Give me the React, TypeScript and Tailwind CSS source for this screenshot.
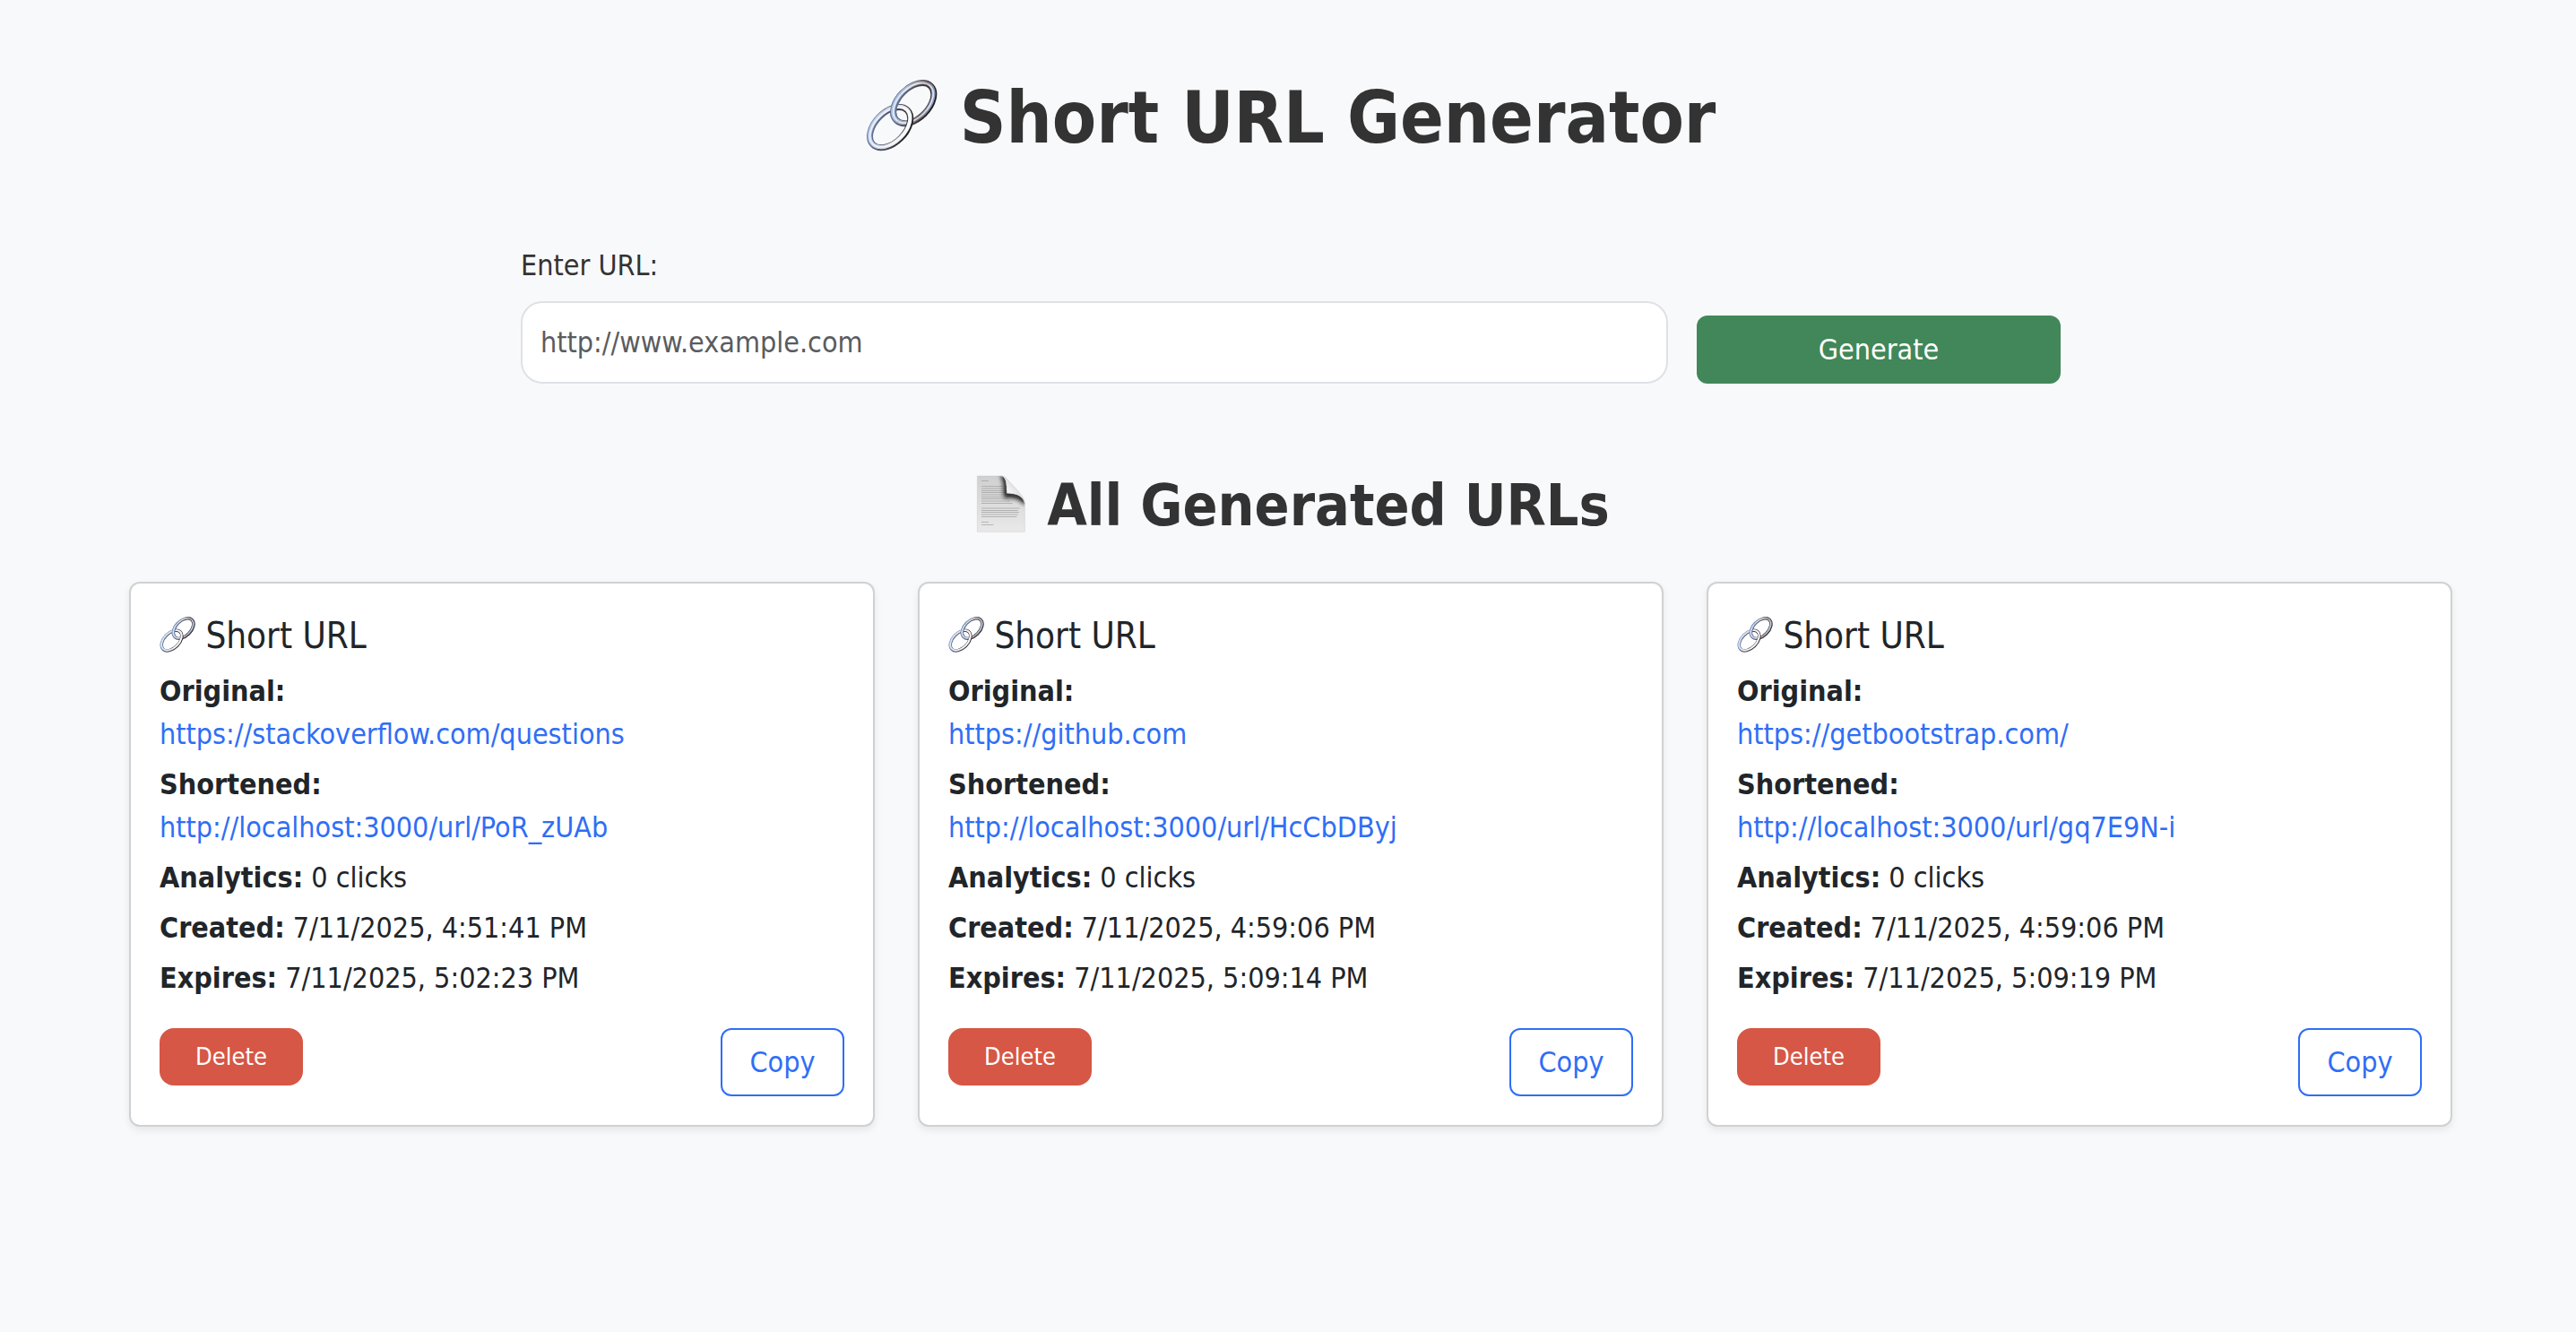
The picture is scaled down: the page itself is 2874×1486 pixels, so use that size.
import { useId, useState, type FormEvent } from "react";

type ShortUrl = {
  id: string;
  original: string;
  shortened: string;
  clicks: number;
  created: string;
  expires: string;
};

const initialUrls: ShortUrl[] = [
  {
    id: "PoR_zUAb",
    original: "https://stackoverflow.com/questions",
    shortened: "http://localhost:3000/url/PoR_zUAb",
    clicks: 0,
    created: "7/11/2025, 4:51:41 PM",
    expires: "7/11/2025, 5:02:23 PM",
  },
  {
    id: "HcCbDByj",
    original: "https://github.com",
    shortened: "http://localhost:3000/url/HcCbDByj",
    clicks: 0,
    created: "7/11/2025, 4:59:06 PM",
    expires: "7/11/2025, 5:09:14 PM",
  },
  {
    id: "gq7E9N-i",
    original: "https://getbootstrap.com/",
    shortened: "http://localhost:3000/url/gq7E9N-i",
    clicks: 0,
    created: "7/11/2025, 4:59:06 PM",
    expires: "7/11/2025, 5:09:19 PM",
  },
];

type RingProps = { x: number; y: number; edge: string; body: string };

function ChainRing({ x, y, edge, body }: RingProps) {
  return (
    <g fill="none">
      <g transform={`translate(${x} ${y}) rotate(-45)`}>
        <ellipse rx="82" ry="51" stroke={edge} strokeWidth="21" />
      </g>
      <g transform={`translate(${x - 1} ${y - 2}) rotate(-45)`}>
        <ellipse rx="82" ry="51" stroke={body} strokeWidth="13" />
      </g>
      <g transform={`translate(${x - 1} ${y - 1}) rotate(-45)`}>
        <ellipse rx="81" ry="50" stroke="#ffffff" strokeWidth="5" opacity="0.75" />
      </g>
    </g>
  );
}

function ChainIcon() {
  const id = useId();
  const edge = `${id}-edge`;
  const topBody = `${id}-top`;
  const lowBody = `${id}-low`;
  const clip = `${id}-clip`;
  const top = { x: 193, y: 105, edge: `url(#${edge})`, body: `url(#${topBody})` };
  const low = { x: 114, y: 187, edge: `url(#${edge})`, body: `url(#${lowBody})` };
  return (
    <svg
      viewBox="32 26 242 242"
      className="inline-block size-[1em] align-[-0.12em]"
      aria-hidden="true"
    >
      <defs>
        <linearGradient id={edge} x1="0" y1="0.5" x2="1" y2="0.5" gradientTransform="rotate(45 0.5 0.5)">
          <stop offset="0" stopColor="#66779a" />
          <stop offset="0.5" stopColor="#4c4850" />
          <stop offset="1" stopColor="#241d1f" />
        </linearGradient>
        <linearGradient id={topBody} x1="0" y1="0.5" x2="1" y2="0.5" gradientTransform="rotate(45 0.5 0.5)">
          <stop offset="0" stopColor="#a9c0e6" />
          <stop offset="0.45" stopColor="#a3a7b3" />
          <stop offset="0.75" stopColor="#756c74" />
          <stop offset="1" stopColor="#8b9dc0" />
        </linearGradient>
        <linearGradient id={lowBody} x1="0" y1="0.5" x2="1" y2="0.5" gradientTransform="rotate(45 0.5 0.5)">
          <stop offset="0" stopColor="#b9cbea" />
          <stop offset="0.5" stopColor="#d5dbe6" />
          <stop offset="1" stopColor="#f2f6fc" />
        </linearGradient>
        <clipPath id={clip}>
          <path d="M100 60 H150 L152 150 L138 172 L100 140 Z" />
        </clipPath>
      </defs>
      <ChainRing {...top} />
      <ChainRing {...low} />
      <g clipPath={`url(#${clip})`}>
        <ChainRing {...top} />
      </g>
    </svg>
  );
}

const PAGE_OUTLINE = "M43 36 H122 C140 38 141 60 142 94 C176 94 198 104 202 130 V223 H43 Z";

const PAGE_LINES = [
  [52, 24], [70, 74], [77, 78], [84, 82], [91, 84], [98, 84], [105, 88],
  [112, 92], [119, 96], [126, 104], [143, 128], [150, 122], [157, 126],
  [164, 122], [171, 118], [189, 24], [198, 40],
];

function PageIcon() {
  const id = useId();
  const paper = `${id}-paper`;
  const curl = `${id}-curl`;
  const soft = `${id}-soft`;
  const clip = `${id}-clip`;
  return (
    <svg
      viewBox="24 33 192 192"
      className="inline-block size-[1em] align-[-0.12em]"
      aria-hidden="true"
    >
      <defs>
        <linearGradient id={paper} x1="0" y1="0" x2="0" y2="1">
          <stop offset="0" stopColor="#d0d0d0" />
          <stop offset="1" stopColor="#e9e9e9" />
        </linearGradient>
        <linearGradient id={curl} x1="0.1" y1="0.9" x2="0.7" y2="0.3">
          <stop offset="0" stopColor="#bdbdbd" />
          <stop offset="0.5" stopColor="#f4f4f4" />
          <stop offset="1" stopColor="#d6d6d6" />
        </linearGradient>
        <filter id={soft} x="-50%" y="-50%" width="200%" height="200%">
          <feGaussianBlur stdDeviation="8" />
        </filter>
        <clipPath id={clip}>
          <path d={PAGE_OUTLINE} />
        </clipPath>
      </defs>
      <path d={PAGE_OUTLINE} fill={`url(#${paper})`} stroke="#bdbdbd" strokeWidth="1" />
      {PAGE_LINES.map(([y, width]) => (
        <rect key={y} x="57" y={y} width={width} height="2" fill="#9c9c9c" />
      ))}
      <g clipPath={`url(#${clip})`}>
        <path
          d="M128 30 C140 40 142 60 142 98 C176 98 198 108 206 126"
          fill="none"
          stroke="#161616"
          strokeWidth="20"
          filter={`url(#${soft})`}
        />
      </g>
      <path
        d="M122 36 C140 38 141 60 142 94 C176 94 198 104 202 130 C203 110 190 98 142 45 C136 38 130 36 122 36 Z"
        fill={`url(#${curl})`}
        stroke="#b4b4b4"
        strokeWidth="1"
      />
    </svg>
  );
}

function UrlForm() {
  const [url, setUrl] = useState("");
  const submit = (event: FormEvent) => event.preventDefault();
  return (
    <form
      onSubmit={submit}
      className="mx-auto flex w-full max-w-[1718px] items-end gap-8 text-[32px] leading-[48px]"
    >
      <div className="flex min-w-0 flex-1 flex-col gap-4">
        <label htmlFor="url" className="text-[#333333]">
          Enter URL:
        </label>
        <input
          id="url"
          type="text"
          value={url}
          onChange={(event) => setUrl(event.target.value)}
          placeholder="http://www.example.com"
          className="h-[92px] w-full rounded-3xl border-2 border-[#dee2e6] bg-white px-5 text-[#212529] placeholder:text-[#595c5f] placeholder:opacity-100"
        />
      </div>
      <button
        type="submit"
        className="h-[76px] w-[406px] rounded-xl bg-[#428759] text-white"
      >
        Generate
      </button>
    </form>
  );
}

function UrlCard({ item, onDelete }: { item: ShortUrl; onDelete: () => void }) {
  return (
    <article className="rounded-xl border-2 border-[#d0d1d2] bg-white p-8 text-[#212529] shadow-[0_4px_8px_rgba(0,0,0,0.075)]">
      <h5 className="mb-3 text-[40px] leading-[52px]">
        <ChainIcon /> Short URL
      </h5>
      <div className="flex flex-col gap-2 text-[32px] leading-[48px]">
        <p>
          <strong className="block">Original:</strong>
          <a href={item.original} className="text-[#2f6ef6]">
            {item.original}
          </a>
        </p>
        <p>
          <strong className="block">Shortened:</strong>
          <a href={item.shortened} className="text-[#2f6ef6]">
            {item.shortened}
          </a>
        </p>
        <p>
          <strong>Analytics:</strong> {item.clicks} clicks
        </p>
        <p>
          <strong>Created:</strong> {item.created}
        </p>
        <p>
          <strong>Expires:</strong> {item.expires}
        </p>
      </div>
      <div className="mt-8 flex items-start justify-between">
        <button
          type="button"
          onClick={onDelete}
          className="h-16 w-[160px] rounded-2xl bg-[#d65745] text-[27px] text-white"
        >
          Delete
        </button>
        <button
          type="button"
          onClick={() => navigator.clipboard?.writeText(item.shortened)}
          className="h-[76px] w-[138px] rounded-xl border-2 border-[#2f6ef6] text-[32px] text-[#2f6ef6]"
        >
          Copy
        </button>
      </div>
    </article>
  );
}

export default function App() {
  const [urls, setUrls] = useState(initialUrls);
  return (
    <div className="min-h-screen bg-[#f8f9fb] pl-1.5 font-['DejaVu_Sans_Condensed','Noto_Sans',sans-serif]">
      <main className="mx-auto w-full max-w-[2640px] px-6 pt-[84px] pb-24">
        <h1 className="mb-[92px] text-center text-[80px] leading-[96px] font-bold text-[#333333]">
          <ChainIcon /> Short URL Generator
        </h1>
        <UrlForm />
        <section className="mt-[98px]">
          <h2 className="mb-[46px] text-center text-[64px] leading-[77px] font-bold text-[#333333]">
            <PageIcon /> All Generated URLs
          </h2>
          <div className="grid grid-cols-3 gap-12">
            {urls.map((item) => (
              <UrlCard
                key={item.id}
                item={item}
                onDelete={() => setUrls(urls.filter((u) => u.id !== item.id))}
              />
            ))}
          </div>
        </section>
      </main>
    </div>
  );
}
